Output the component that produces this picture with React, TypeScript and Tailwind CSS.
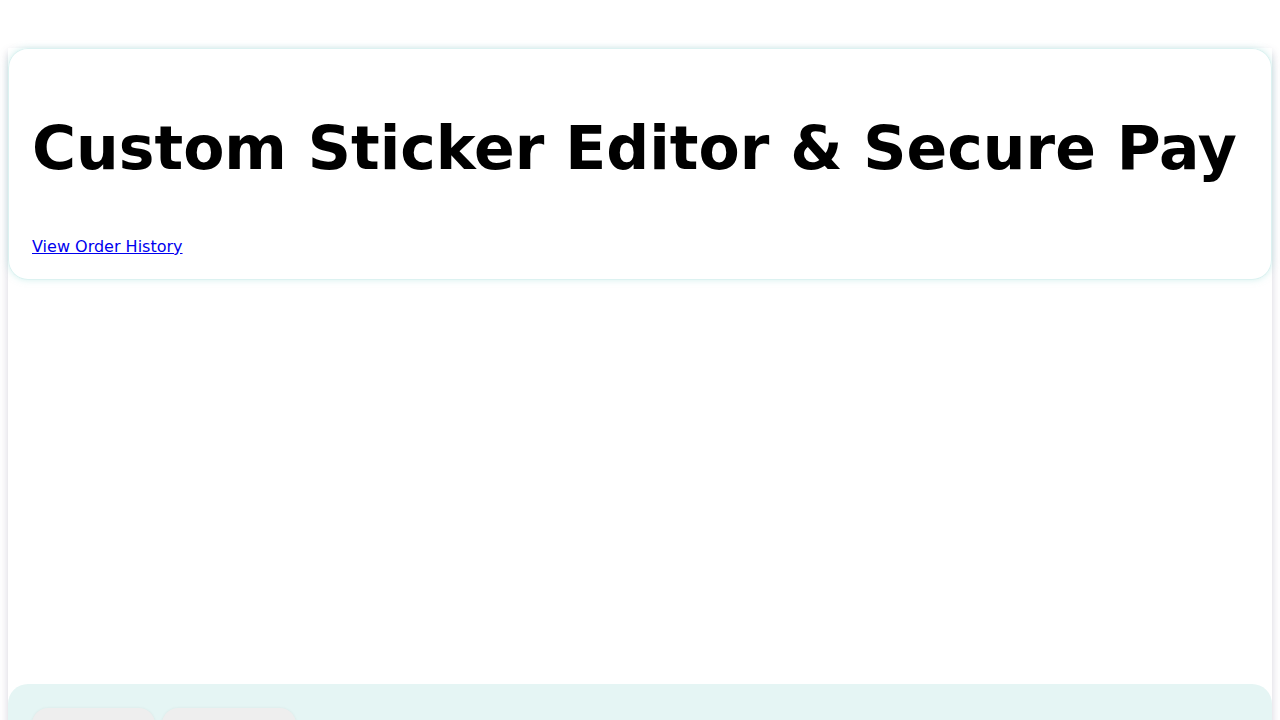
import React from 'react';

const App: React.FC = () => {
  return (
    <div className="min-h-screen bg-white px-2 pt-12" style={{ fontFamily: '"DejaVu Sans", sans-serif' }}>
      <div className="bg-white shadow-[0_4px_8px_rgba(90,80,120,0.25)]">
        <header className="rounded-[20px] bg-white px-6 pb-6 pt-16 shadow-[inset_0_0_0_1px_#dcf2f1,0_0_6px_rgba(170,225,222,0.5)]">
          <h1 className="text-[60px] font-bold leading-[72px] text-black">Custom Sticker Editor &amp; Secure Pay</h1>
          <a href="#" className="mt-[53px] block w-fit text-base leading-[19px] text-[#0000ee] underline">
            View Order History
          </a>
        </header>
        <div className="h-[404px]" />
        <section className="rounded-t-[20px] bg-[#e5f5f4] px-6 pt-6">
          <div className="flex gap-[7px]">
            <button className="h-12 w-[123px] rounded-2xl bg-[#eeeeee] shadow-[0_0_3px_rgba(0,0,0,0.06)]" />
            <button className="h-12 w-[134px] rounded-2xl bg-[#eeeeee] shadow-[0_0_3px_rgba(0,0,0,0.06)]" />
          </div>
        </section>
      </div>
    </div>
  );
};

export default App;
